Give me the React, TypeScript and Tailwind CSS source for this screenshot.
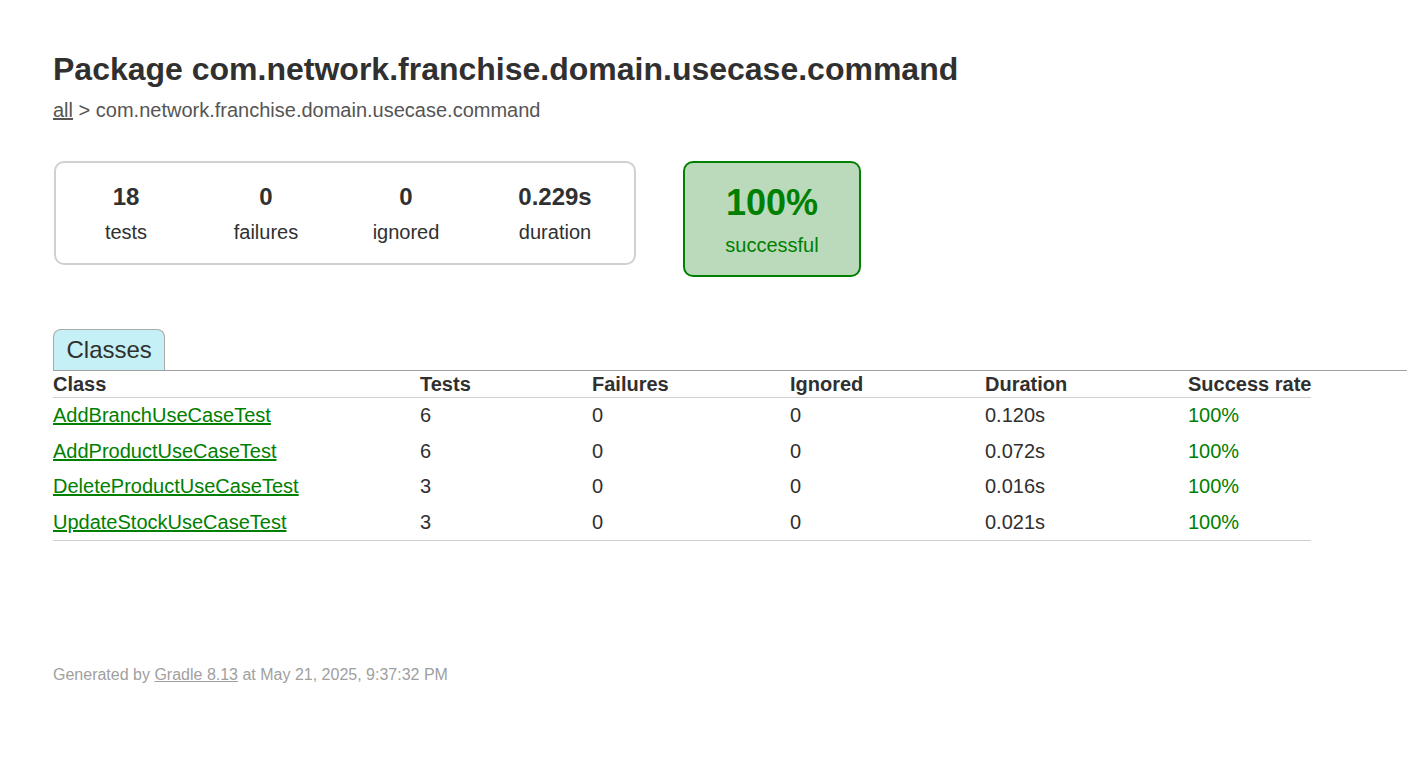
const stats = [
  { value: "18", label: "tests", width: "w-[140px]" },
  { value: "0", label: "failures", width: "w-[140px]" },
  { value: "0", label: "ignored", width: "w-[140px]" },
  { value: "0.229s", label: "duration", width: "w-[158px]" },
];

const rows = [
  { name: "AddBranchUseCaseTest", tests: 6, failures: 0, ignored: 0, duration: "0.120s", pb: "pb-[7px]" },
  { name: "AddProductUseCaseTest", tests: 6, failures: 0, ignored: 0, duration: "0.072s", pb: "pb-[6px]" },
  { name: "DeleteProductUseCaseTest", tests: 3, failures: 0, ignored: 0, duration: "0.016s", pb: "pb-[7px]" },
  { name: "UpdateStockUseCaseTest", tests: 3, failures: 0, ignored: 0, duration: "0.021s", pb: "pb-[6px]" },
];

const App = () => {
  return (
    <div className="min-h-screen bg-white pl-[53px] pt-[51px] font-['Liberation_Sans',Arial,sans-serif] text-[20px] text-[#303030]">
      <h1 className="text-[32px] font-bold leading-[37px] whitespace-nowrap">
        Package com.network.franchise.domain.usecase.command
      </h1>
      <div className="mt-[11px] leading-[23px] text-[#555555]">
        <a href="#" className="underline">
          all
        </a>{" "}
        &gt; com.network.franchise.domain.usecase.command
      </div>

      <div className="mt-[39px] flex items-start gap-[47px] pl-px">
        <div className="flex h-[104px] w-[582px] rounded-[10px] border-2 border-[#d0d0d0] pt-[20px]">
          {stats.map((s) => (
            <div key={s.label} className={`${s.width} flex flex-col items-center`}>
              <div className="text-[24px] font-bold leading-[28px]">{s.value}</div>
              <div className="mt-[10px] leading-[23px]">{s.label}</div>
            </div>
          ))}
        </div>
        <div className="flex h-[116px] w-[178px] flex-col items-center rounded-[10px] border-2 border-[#008000] bg-[#bbd9bb] pt-[19px] text-[#008000]">
          <div className="text-[36px] font-bold leading-[41px]">100%</div>
          <div className="mt-[11px] leading-[23px]">successful</div>
        </div>
      </div>

      <div className="mt-[52px] flex border-b border-[#a0a0a0]">
        <div className="h-[41px] rounded-t-[8px] border border-b-0 border-[#aaaaaa] bg-[#c5f0f5] px-[12.5px] pt-[6px] text-[24px] leading-[28px]">
          Classes
        </div>
      </div>

      <table className="w-[1258px] table-fixed border-collapse">
        <colgroup>
          <col className="w-[367px]" />
          <col className="w-[172px]" />
          <col className="w-[198px]" />
          <col className="w-[195px]" />
          <col className="w-[203px]" />
          <col className="w-[123px]" />
        </colgroup>
        <thead>
          <tr className="border-b border-[#d0d0d0] text-left align-top">
            <th className="pt-[2px] pb-px leading-[23px] font-bold whitespace-nowrap">Class</th>
            <th className="pt-[2px] pb-px leading-[23px] font-bold">Tests</th>
            <th className="pt-[2px] pb-px leading-[23px] font-bold">Failures</th>
            <th className="pt-[2px] pb-px leading-[23px] font-bold">Ignored</th>
            <th className="pt-[2px] pb-px leading-[23px] font-bold">Duration</th>
            <th className="pt-[2px] pb-px leading-[23px] font-bold whitespace-nowrap">Success rate</th>
          </tr>
        </thead>
        <tbody>
          {rows.map((r, i) => (
            <tr
              key={r.name}
              className={`align-top ${i === rows.length - 1 ? "border-b border-[#d0d0d0]" : ""}`}
            >
              <td className={`pt-[6px] ${r.pb} leading-[23px] whitespace-nowrap`}>
                <a href="#" className="text-[#008000] underline">
                  {r.name}
                </a>
              </td>
              <td className={`pt-[6px] ${r.pb} leading-[23px]`}>{r.tests}</td>
              <td className={`pt-[6px] ${r.pb} leading-[23px]`}>{r.failures}</td>
              <td className={`pt-[6px] ${r.pb} leading-[23px]`}>{r.ignored}</td>
              <td className={`pt-[6px] ${r.pb} leading-[23px]`}>{r.duration}</td>
              <td className={`pt-[6px] ${r.pb} leading-[23px] text-[#008000]`}>100%</td>
            </tr>
          ))}
        </tbody>
      </table>

      <div className="mt-[125px] text-[16px] leading-[18px] whitespace-nowrap text-[#a0a0a0]">
        Generated by{" "}
        <a href="#" className="underline">
          Gradle 8.13
        </a>{" "}
        at May 21, 2025, 9:37:32 PM
      </div>
    </div>
  );
};

export default App;
